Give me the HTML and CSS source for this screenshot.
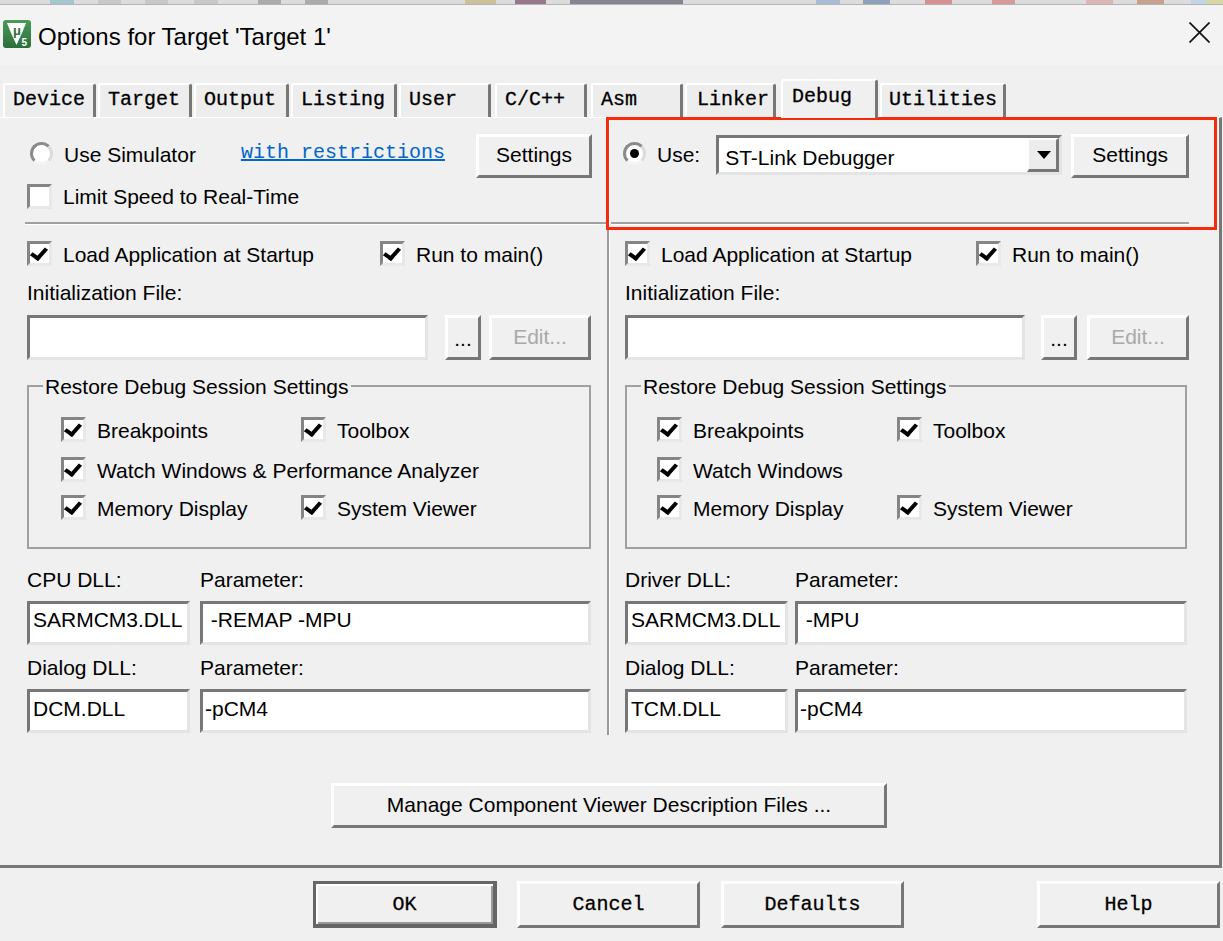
FILE: index.html
```html
<!DOCTYPE html>
<html lang="en">
<head>
  <meta charset="UTF-8" />
  <title>Options for Target 'Target 1'</title>
  <link rel="stylesheet" href="styles.css">
</head>
<body>
  <div class="dialog">
    <div class="app-strip"></div>

    <div class="titlebar">
      <svg class="app-icon" viewBox="0 0 28 28">
        <defs>
          <linearGradient id="iconGreen" x1="0" y1="0" x2="0" y2="1">
            <stop offset="0" stop-color="#4a9a5a"/>
            <stop offset="1" stop-color="#2a6e3a"/>
          </linearGradient>
        </defs>
        <rect width="28" height="28" rx="3" fill="url(#iconGreen)"/>
        <path d="M4 3H23L19 13 13.5 25 8 13Z" fill="#fff"/>
        <text x="10" y="15" class="icon-mu">μ</text>
        <text x="18.5" y="26" class="icon-five">5</text>
      </svg>
      <span class="title-text">Options for Target 'Target 1'</span>
      <svg class="close-x" viewBox="0 0 21 21"><path d="M0.5 0.5L20.5 20.5M20.5 0.5L0.5 20.5" stroke="#111" stroke-width="1.7" fill="none"/></svg>
    </div>

    <div class="tabs">
      <div class="tab w93">Device</div>
      <div class="tab w94">Target</div>
      <div class="tab w95">Output</div>
      <div class="tab w106">Listing</div>
      <div class="tab w92 gap4">User</div>
      <div class="tab w92 gap4">C/C++</div>
      <div class="tab w92">Asm</div>
      <div class="tab w91 gap5 linker">Linker</div>
      <div class="tab w97 active">Debug</div>
      <div class="tab w126 utilities">Utilities</div>
    </div>

    <div class="panel">
      <div class="panes">
        <section class="pane pane-left">
          <div class="top-row">
            <span class="radio"></span>
            <span class="label sim-label">Use Simulator</span>
            <a class="link">with restrictions</a>
            <div class="btn btn-settings">Settings</div>
          </div>
          <div class="check-row limit-row"><span class="check empty"></span><span class="label">Limit Speed to Real-Time</span></div>
          <div class="sep sep-left"></div>

          <div class="check-row load-row">
            <span class="check on"></span><span class="label">Load Application at Startup</span>
            <span class="check on run-left"></span><span class="label">Run to main()</span>
          </div>
          <div class="label init-label">Initialization File:</div>
          <div class="file-row">
            <div class="input file-input"></div>
            <div class="btn btn-dots">...</div>
            <div class="btn btn-edit">Edit...</div>
          </div>

          <fieldset class="group">
            <legend class="label">Restore Debug Session Settings</legend>
            <div class="group-row">
              <span class="check on"></span><span class="label col">Breakpoints</span>
              <span class="check on"></span><span class="label">Toolbox</span>
            </div>
            <div class="group-row row-2">
              <span class="check on"></span><span class="label">Watch Windows &amp; Performance Analyzer</span>
            </div>
            <div class="group-row row-3">
              <span class="check on"></span><span class="label col">Memory Display</span>
              <span class="check on"></span><span class="label">System Viewer</span>
            </div>
          </fieldset>

          <div class="dll-grid">
            <div class="label">CPU DLL:</div><div class="label">Parameter:</div>
            <div class="input">SARMCM3.DLL</div><div class="input param">&nbsp;-REMAP -MPU</div>
            <div class="label">Dialog DLL:</div><div class="label">Parameter:</div>
            <div class="input low">DCM.DLL</div><div class="input param low">-pCM4</div>
          </div>
        </section>

        <section class="pane pane-right">
          <div class="top-row">
            <span class="radio picked"></span>
            <span class="label use-label">Use:</span>
            <div class="combo">
              <span class="combo-text">ST-Link Debugger</span>
              <span class="combo-btn"><i class="arrow"></i></span>
            </div>
            <div class="btn btn-settings-r">Settings</div>
          </div>
          <div class="limit-spacer"></div>
          <div class="sep sep-right"></div>

          <div class="check-row load-row">
            <span class="check on"></span><span class="label">Load Application at Startup</span>
            <span class="check on run-right"></span><span class="label">Run to main()</span>
          </div>
          <div class="label init-label">Initialization File:</div>
          <div class="file-row file-row-r">
            <div class="input file-input"></div>
            <div class="btn btn-dots">...</div>
            <div class="btn btn-edit">Edit...</div>
          </div>

          <fieldset class="group group-r">
            <legend class="label">Restore Debug Session Settings</legend>
            <div class="group-row">
              <span class="check on"></span><span class="label col">Breakpoints</span>
              <span class="check on"></span><span class="label">Toolbox</span>
            </div>
            <div class="group-row row-2">
              <span class="check on"></span><span class="label">Watch Windows</span>
            </div>
            <div class="group-row row-3">
              <span class="check on"></span><span class="label col">Memory Display</span>
              <span class="check on"></span><span class="label">System Viewer</span>
            </div>
          </fieldset>

          <div class="dll-grid grid-right">
            <div class="label">Driver DLL:</div><div class="label">Parameter:</div>
            <div class="input">SARMCM3.DLL</div><div class="input param">&nbsp;-MPU</div>
            <div class="label">Dialog DLL:</div><div class="label">Parameter:</div>
            <div class="input low">TCM.DLL</div><div class="input param low">-pCM4</div>
          </div>
        </section>
      </div>

      <div class="btn btn-manage">Manage Component Viewer Description Files ...</div>
    </div>

    <div class="footer">
      <div class="btn foot-btn btn-ok">OK</div>
      <div class="btn foot-btn btn-cancel">Cancel</div>
      <div class="btn foot-btn btn-defaults">Defaults</div>
      <div class="btn foot-btn btn-help">Help</div>
    </div>

    <div class="callout"></div>
  </div>
</body>
</html>
```

FILE: styles.css
```css
html, body {
  margin: 0;
  padding: 0;
  height: 100%;
  overflow: hidden;
  background: #f0f0f0;
}

.dialog {
  position: relative;
  width: 1223px;
  height: 941px;
  display: flex;
  flex-direction: column;
  font-family: "Liberation Sans", Arial, sans-serif;
  color: #000;
}

/* bit of the main window toolbar showing above the dialog */
.app-strip {
  height: 4px;
  border-bottom: 1px solid #b5b5b5;
  background: linear-gradient(90deg,
    #dcdcdc 50px, #a5c6ce 50px, #a5c6ce 74px,
    #dcdcdc 74px, #dcdcdc 98px, #c8c8c8 98px, #c8c8c8 121px,
    #dcdcdc 121px, #dcdcdc 145px, #c8c8c8 145px, #c8c8c8 168px,
    #dcdcdc 168px, #dcdcdc 194px, #c8c8c8 194px, #c8c8c8 218px,
    #dcdcdc 218px, #dcdcdc 258px, #ababab 258px, #ababab 281px,
    #dcdcdc 281px, #dcdcdc 305px, #ababab 305px, #ababab 328px,
    #dcdcdc 328px, #dcdcdc 465px, #ccc09a 465px, #ccc09a 496px,
    #dcdcdc 496px, #dcdcdc 515px, #97788a 515px, #97788a 546px,
    #dcdcdc 546px, #dcdcdc 570px, #85858f 570px, #85858f 683px,
    #dcdcdc 683px, #dcdcdc 816px, #aabbd8 816px, #aabbd8 840px,
    #dcdcdc 840px, #dcdcdc 863px, #8ea0ba 863px, #8ea0ba 890px,
    #dcdcdc 890px, #dcdcdc 925px, #d68f92 925px, #d68f92 952px,
    #dcdcdc 952px, #dcdcdc 992px, #d69a9a 992px, #d69a9a 1015px,
    #dcdcdc 1015px, #dcdcdc 1086px, #dcb5b5 1086px, #dcb5b5 1113px,
    #dcdcdc 1113px, #dcdcdc 1137px, #c8a090 1137px, #c8a090 1164px,
    #dcdcdc 1164px, #dcdcdc 1191px, #c2d4e6 1191px, #c2d4e6 1207px,
    #d6d6a2 1207px);
}

.titlebar {
  height: 60px;
  background: #f3f3f3;
  display: flex;
  align-items: center;
  padding: 0 13px 0 3px;
}

.app-icon {
  width: 28px;
  height: 28px;
  margin-top: -2px;
}

.icon-mu {
  font-family: "Liberation Sans", sans-serif;
  font-size: 13px;
  font-weight: bold;
  fill: #2a6e3a;
}

.icon-five {
  font-family: "Liberation Sans", sans-serif;
  font-size: 10px;
  font-weight: bold;
  fill: #fff;
}

.title-text {
  font-size: 24px;
  margin-left: 7px;
  margin-top: 3px;
}

.close-x {
  width: 21px;
  height: 21px;
  margin-left: auto;
  margin-top: -6px;
}

.tabs {
  height: 52px;
  box-sizing: border-box;
  padding: 13px 0 0 3px;
  display: flex;
  align-items: flex-end;
  position: relative;
  z-index: 1;
}

.tab {
  height: 34px;
  box-sizing: border-box;
  margin-right: 2px;
  padding-left: 8px;
  background: #ededed;
  border-top: 2px solid #fff;
  border-left: 2px solid #fff;
  border-right: 3px solid #777;
  border-radius: 3px 3px 0 0;
  font-family: "Liberation Mono", monospace;
  -webkit-text-stroke: 0.3px #000;
  font-size: 20px;
  line-height: 30px;
  white-space: nowrap;
  overflow: hidden;
}

.w93 { width: 93px; }
.w94 { width: 94px; }
.w95 { width: 95px; }
.w106 { width: 106px; }
.w92 { width: 92px; }
.w91 { width: 91px; }
.w97 { width: 97px; }
.w126 { width: 126px; }
.gap4 { margin-right: 4px; }
.gap5 { margin-right: 5px; }
.linker { padding-left: 10px; }
.utilities { padding-left: 7px; }

.tab.active {
  height: 39px;
  margin-bottom: -1px;
  padding-left: 9px;
  background: #f0f0f0;
  line-height: 31px;
}

.panel {
  width: 1222px;
  height: 751px;
  box-sizing: border-box;
  border-top: 1px solid #fff;
  border-right: 3px solid #777;
  border-bottom: 3px solid #777;
  display: flex;
  flex-direction: column;
}

.panes {
  display: flex;
  height: 617px;
}

.pane {
  box-sizing: border-box;
  padding-top: 16px;
  display: flex;
  flex-direction: column;
}

.pane-left {
  width: 609px;
  padding-left: 27px;
  padding-right: 16px;
  border-right: 2px solid #9a9a9a;
}

.pane-right {
  width: 610px;
  padding-left: 15px;
  padding-right: 32px;
  border-left: 1px solid #fff;
}

.label {
  font-size: 21px;
  line-height: 24px;
  white-space: nowrap;
}

.top-row {
  height: 44px;
  display: flex;
  align-items: center;
}

.radio {
  flex: none;
  width: 23px;
  height: 23px;
  box-sizing: border-box;
  border-radius: 50%;
  background: #fff;
  border: 3px solid;
  border-color: #8a8a8a #dcdcdc #f4f4f4 #8a8a8a;
  margin-left: 3px;
  margin-top: -6px;
  display: flex;
  align-items: center;
  justify-content: center;
}

.radio.picked {
  margin-left: -2px;
}

.radio.picked::after {
  content: "";
  width: 9px;
  height: 9px;
  border-radius: 50%;
  background: #000;
}

.sim-label {
  margin-left: 11px;
  margin-top: -2px;
}

.link {
  font-family: "Liberation Mono", monospace;
  font-size: 20px;
  color: #0066cc;
  text-decoration: underline;
  margin-left: 45px;
  margin-top: -8px;
}

.btn {
  flex: none;
  box-sizing: border-box;
  background: #f0f0f0;
  border-top: 3px solid #fff;
  border-left: 3px solid #fff;
  border-right: 3px solid #777;
  border-bottom: 3px solid #777;
  padding-bottom: 2px;
  display: flex;
  align-items: center;
  justify-content: center;
  font-size: 21px;
  white-space: nowrap;
}

.btn-settings {
  width: 116px;
  height: 44px;
  margin-left: auto;
  margin-right: -1px;
}

.btn-settings-r {
  width: 118px;
  height: 44px;
  margin-left: 9px;
}

.check-row {
  display: flex;
  align-items: center;
}

.limit-row {
  height: 24px;
  margin-top: 6px;
}

.limit-row .label { padding-top: 2px; }

.limit-spacer {
  height: 24px;
  margin-top: 6px;
}

.check {
  display: inline-block;
  flex: none;
  width: 25px;
  height: 25px;
  box-sizing: border-box;
  background: #fff;
  border: 3px solid;
  border-color: #858585 #e8e8e8 #e8e8e8 #858585;
  margin-right: 11px;
  position: relative;
}

.check.on::after {
  content: "";
  position: absolute;
  left: 4px;
  top: 1px;
  width: 6px;
  height: 11px;
  border-right: 4px solid #000;
  border-bottom: 4px solid #000;
  transform: rotate(36deg) skewX(-6deg);
}

.sep {
  height: 2px;
  background: #a0a0a0;
  border-bottom: 1px solid #fff;
  margin-top: 14px;
}

.sep-left { margin-left: -2px; margin-right: -16px; }
.sep-right { margin-left: -14px; margin-right: -2px; }

.load-row {
  height: 25px;
  margin-top: 16px;
}

.load-row .label { padding-top: 2px; }

.run-left { margin-left: 66px; }
.run-right { margin-left: 64px; }

.init-label {
  margin-top: 16px;
  height: 22px;
  line-height: 22px;
}

.file-row {
  display: flex;
  height: 45px;
  margin-top: 11px;
}

.input {
  box-sizing: border-box;
  background: #fff;
  border: 3px solid;
  border-color: #777 #e4e4e4 #e4e4e4 #777;
  font-size: 21px;
  line-height: 32px;
  padding-left: 3px;
  white-space: nowrap;
  overflow: hidden;
}

.input.param { padding-left: 2px; }
.input.low { line-height: 34px; }

.file-input {
  flex: none;
  width: 401px;
}

.btn-dots {
  width: 36px;
  margin-left: 17px;
  padding-top: 2px;
  padding-bottom: 0;
}

.btn-edit {
  width: 102px;
  margin-left: 8px;
  color: #a9a9a9;
}

.file-row-r .file-input { width: 400px; }
.file-row-r .btn-dots { margin-left: 16px; }
.file-row-r .btn-edit { margin-left: 10px; }

.group {
  margin: 13px 0 0;
  padding: 18px 0 0 32px;
  height: 176px;
  box-sizing: border-box;
  border: 2px solid #a0a0a0;
  min-width: 0;
}

.group legend {
  margin-left: -18px;
  padding: 0 2px;
  height: 26px;
  line-height: 28px;
}

.group-r { padding-left: 30px; }
.group-r legend { margin-left: -16px; }

.group-row {
  display: flex;
  align-items: center;
  height: 24px;
}

.group-row .label { padding-top: 4px; }

.row-2 { margin-top: 16px; }
.row-3 { margin-top: 14px; }

.col { width: 204px; }

.dll-grid {
  display: grid;
  grid-template-columns: 163px 1fr;
  grid-template-rows: 22px 44px 24px 44px;
  column-gap: 10px;
  row-gap: 10px;
  margin-top: 20px;
}

.dll-grid .label {
  line-height: 22px;
  align-self: end;
}

.grid-right { column-gap: 7px; }

.combo {
  flex: none;
  width: 346px;
  height: 40px;
  box-sizing: border-box;
  margin-left: 16px;
  margin-top: -2px;
  background: #fff;
  border: 3px solid;
  border-color: #777 #e4e4e4 #e4e4e4 #777;
  display: flex;
  align-items: stretch;
}

.combo-text {
  flex: 1;
  font-size: 21px;
  line-height: 40px;
  padding-left: 6px;
  white-space: nowrap;
}

.combo-btn {
  width: 32px;
  box-sizing: border-box;
  padding-left: 2px;
  background: #ececec;
  border-top: 2px solid #fff;
  border-left: 2px solid #fff;
  border-right: 3px solid #777;
  border-bottom: 3px solid #777;
  display: flex;
  align-items: center;
  justify-content: center;
}

.arrow {
  width: 0;
  height: 0;
  border-left: 7.5px solid transparent;
  border-right: 7.5px solid transparent;
  border-top: 8px solid #000;
}

.use-label {
  margin-left: 11px;
  margin-top: -2px;
}

.btn-manage {
  width: 556px;
  height: 45px;
  margin: 48px 0 0 331px;
}

.footer {
  display: flex;
  padding: 13px 0 0 313px;
}

.foot-btn {
  width: 183px;
  height: 47px;
  padding-bottom: 0;
  font-family: "Liberation Mono", monospace;
  -webkit-text-stroke: 0.3px #000;
  font-size: 20px;
}

.btn-ok {
  width: 184px;
  border: 3px solid #666;
  border-right-width: 4px;
  border-bottom-width: 4px;
  box-shadow: inset 2px 2px 0 #fff, inset -2px -2px 0 #999;
}

.btn-cancel { margin-left: 20px; }
.btn-defaults { margin-left: 21px; }
.btn-help { margin-left: 133px; }

/* red annotation box drawn on top of the screenshot */
.callout {
  position: absolute;
  left: 606px;
  top: 117px;
  width: 611px;
  height: 113px;
  box-sizing: border-box;
  border: 3px solid #f52c0c;
  pointer-events: none;
}
```
